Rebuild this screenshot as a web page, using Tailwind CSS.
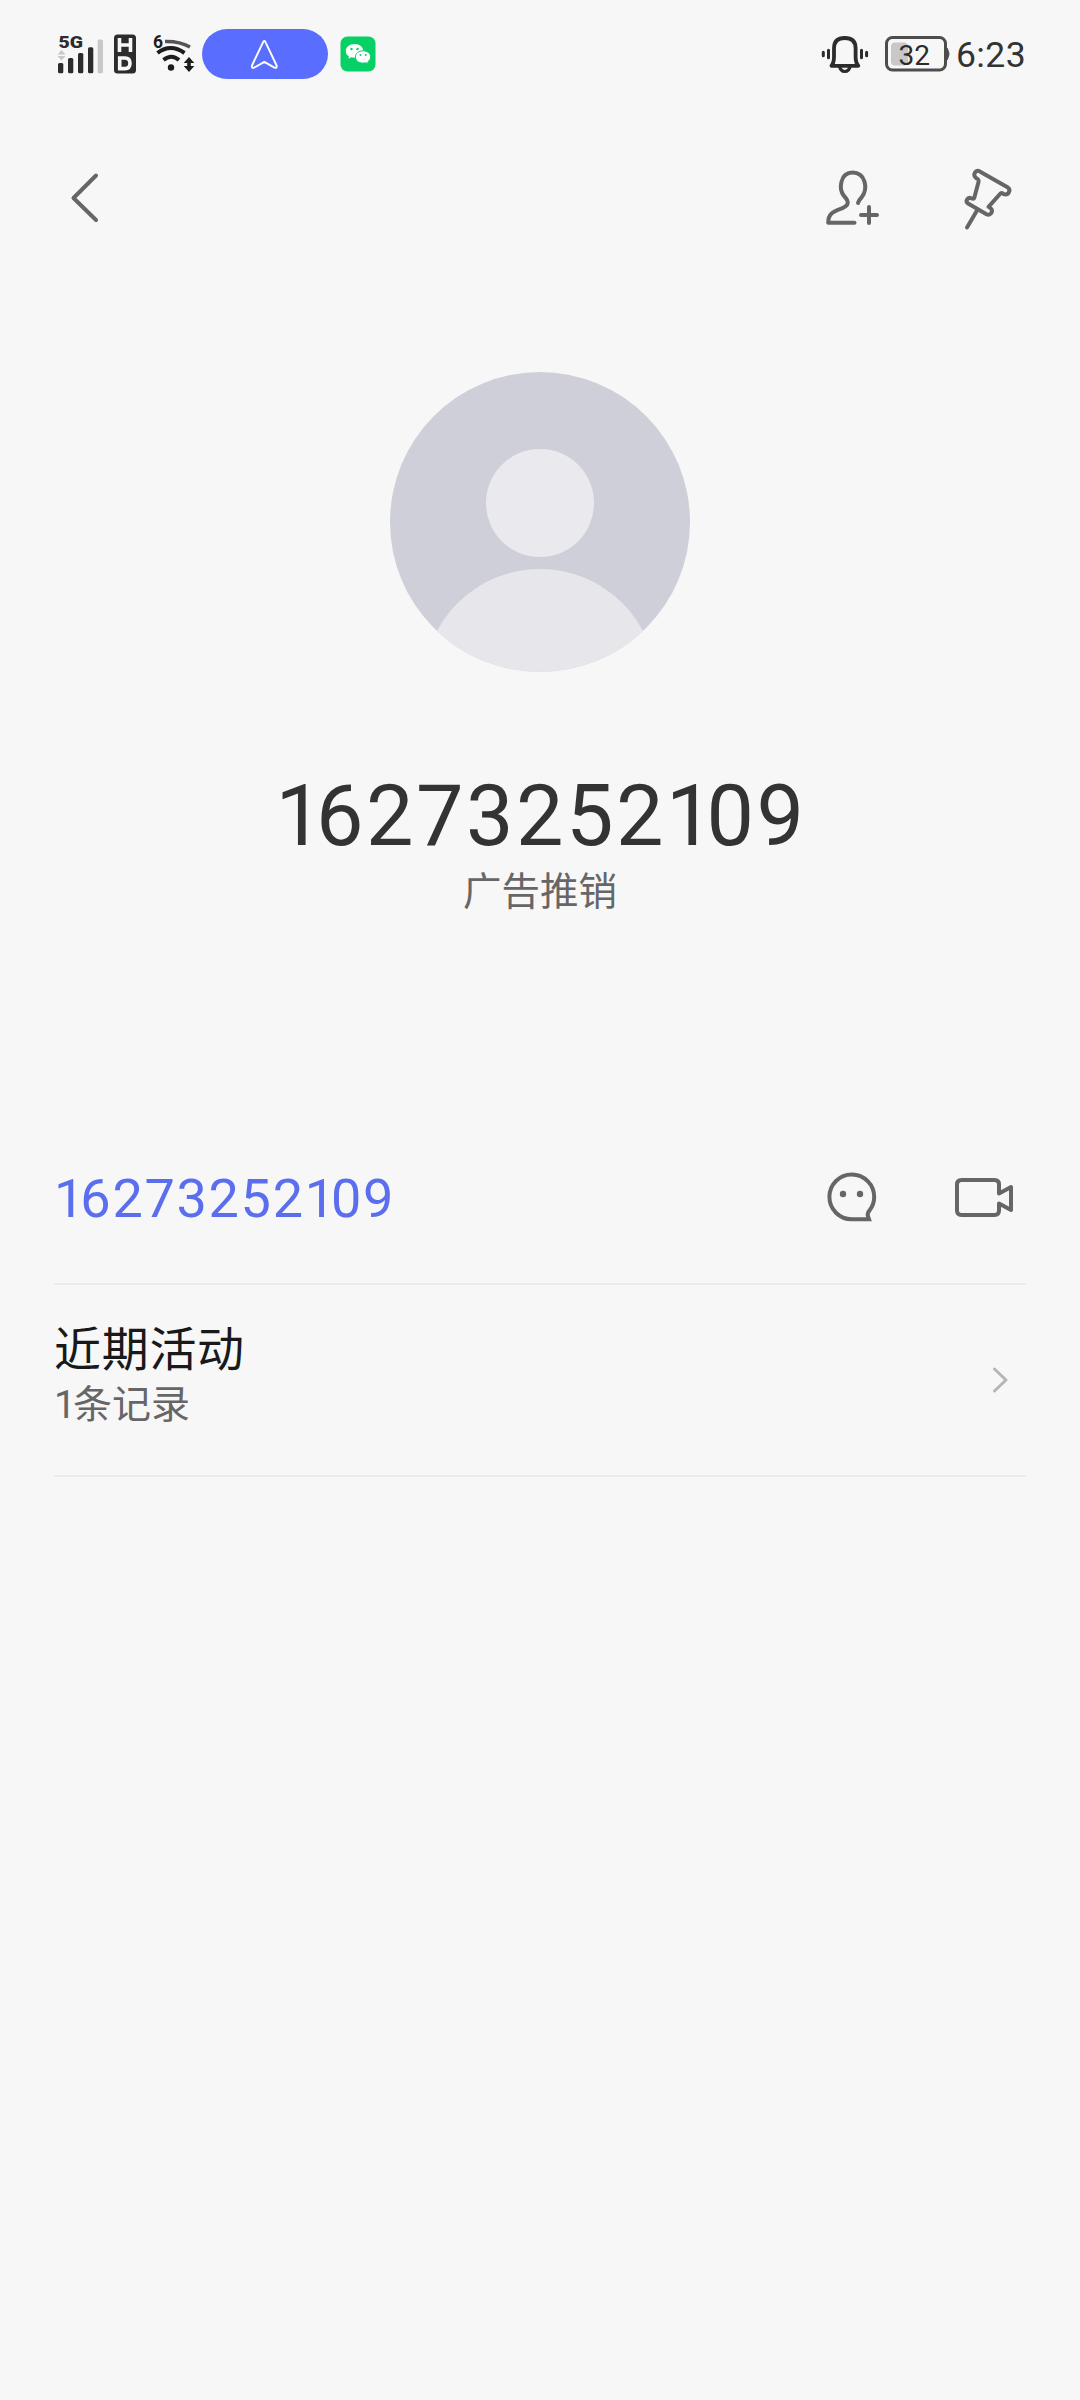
<!DOCTYPE html>
<html lang="zh-CN">
<head>
<meta charset="utf-8">
<title>联系人</title>
<script src="https://cdn.jsdelivr.net/npm/@tailwindcss/browser@4"></script>
</head>
<body class="w-[1080px] h-[2400px] overflow-hidden bg-[#f7f7f7] font-['Roboto','Noto_Sans_CJK_SC',sans-serif] text-[#333333]">
<!-- Status bar -->
<header class="flex h-[108px] items-center pl-[54px] pr-[54px]">
  <svg class="h-[50px] w-[52px] shrink-0" viewBox="54 29 52 50">
    <text x="58.5" y="48.2" font-size="16.5" font-weight="900" textLength="24.500" lengthAdjust="spacingAndGlyphs" fill="#2c2c2c">5G</text>
    <path d="M61.5 50l4 4.500h-8zM61.5 60.500l4-4.500h-8z" fill="#c8c8c8"/>
    <g fill="#2c2c2c"><rect x="58" y="63" width="5.300" height="10.300" rx="1.500"/><rect x="68" y="58" width="5.300" height="15.300" rx="1.500"/><rect x="78" y="53" width="5.300" height="20.300" rx="1.500"/><rect x="88" y="47.300" width="5.300" height="26" rx="1.500"/></g>
    <rect x="97.700" y="39.500" width="5.300" height="33.800" rx="1.500" fill="#c8c8c8"/>
  </svg>
  <svg class="ml-[6px] h-[50px] w-[28px] shrink-0" viewBox="112 29 28 50">
    <rect x="114" y="34.500" width="22" height="39" rx="3.500" fill="#2c2c2c"/>
    <g fill="none" stroke="#f7f7f7" stroke-width="3.600"><path d="M119.500 38v14M130.500 38v14M119.500 45h11"/><path d="M119.700 58h5.300q5 0 5 5.300t-5 5.300h-5.300z"/></g>
  </svg>
  <svg class="ml-[10px] h-[50px] w-[46px] shrink-0" viewBox="150 29 46 50">
    <text x="153" y="47.500" font-size="17.500" font-weight="700" fill="#1d1d1d">6</text>
    <path d="M165 41.500q14-.5 25 5.500" fill="none" stroke="#555" stroke-width="3.600"/>
    <path d="M157.500 53q13-10 27 0M163.500 60q8-6.500 15.500 0" fill="none" stroke="#1d1d1d" stroke-width="4"/>
    <circle cx="171" cy="67.500" r="3.200" fill="#1d1d1d"/>
    <path d="M189 57l5.300 6h-3.500v3h3.500l-5.300 6-5.300-6h3.500v-3h-3.500z" fill="#1d1d1d"/>
  </svg>
  <div class="ml-[6px] flex h-[50px] w-[126px] shrink-0 items-center justify-center rounded-full bg-[#596eff]">
    <svg class="h-[34px] w-[34px]" viewBox="248 36 34 34"><path d="M264.300 40q.8 0 1.300 1.300l11 23.200q.6 3-2.100 2.200l-10.200-5.800-10.200 5.800q-2.700.8-2.100-2.200l11-23.200q.5-1.300 1.300-1.300z" fill="none" stroke="#fff" stroke-width="1.900" stroke-linejoin="round"/></svg>
  </div>
  <svg class="ml-[12px] h-[36px] w-[36px] shrink-0" viewBox="340 36 36 36">
    <rect x="340.500" y="36.500" width="35" height="35" rx="7" fill="#07d166"/>
    <path d="M354.500 44c-5 0-8.700 3-8.700 6.900 0 2.300 1.200 4.200 3.200 5.500l-.7 2.400 3-1.500c1 .3 2 .4 3.200.4 5 0 8.700-3 8.700-6.900s-3.700-6.800-8.700-6.800z" fill="#fff"/>
    <path d="M363 50.800c-4.500 0-7.600 2.700-7.600 6.100s3.100 6.200 7.600 6.200c1 0 1.900-.1 2.700-.4l2.700 1.300-.6-2.200c1.700-1.100 2.800-2.900 2.800-4.900 0-3.400-3.200-6.100-7.600-6.100z" fill="#fff" stroke="#07d166" stroke-width="1"/>
    <g fill="#07d166"><circle cx="351.500" cy="49" r="1.200"/><circle cx="357.500" cy="49" r="1.200"/><circle cx="360.500" cy="55" r="1"/><circle cx="365.700" cy="55" r="1"/></g>
  </svg>
  <svg class="ml-auto h-[50px] w-[50px] shrink-0" viewBox="820 29 50 50">
    <path d="M831.500 65.800q2.500-3 2.500-9v-8.500q0-10.300 10.800-10.300t10.800 10.300v8.500q0 6 2.700 9z" fill="none" stroke="#2c2c2c" stroke-width="3.800" stroke-linejoin="round"/>
    <path d="M839.500 66q.8 5.500 5.300 5.500t5.300-5.500" fill="none" stroke="#2c2c2c" stroke-width="3.200"/>
    <path d="M828.500 50.200v7.600M861.500 50.200v7.600M823.300 52.300v3.400M866.600 52.300v3.400" stroke="#2c2c2c" stroke-width="3" stroke-linecap="round"/>
  </svg>
  <svg class="ml-[12px] h-[50px] w-[70px] shrink-0" viewBox="882 29 70 50">
    <rect x="891" y="42.500" width="17" height="23" rx="4" fill="#c8c8c8"/>
    <rect x="886.500" y="37.500" width="59" height="32.500" rx="6" fill="none" stroke="#4d4d4d" stroke-width="3"/>
    <path d="M947 48q2 4 2 6t-2 6z" fill="#4d4d4d" stroke="#4d4d4d"/>
    <text x="898.500" y="64.800" font-size="28" textLength="31.500" lengthAdjust="spacingAndGlyphs" fill="#2c2c2c">32</text>
  </svg>
  <span class="ml-[4px] w-[70px] shrink-0 pt-[2px] text-[35.500px] leading-[50px] tracking-[0.4px] whitespace-nowrap">6:23</span>
</header>
<!-- Toolbar -->
<nav class="flex h-[182px] items-start justify-between px-[54px] pt-[42px]">
  <svg class="h-[100px] w-[80px]" viewBox="54 150 80 100"><path d="M96 175.500L73.500 198l22.500 22" fill="none" stroke="#666" stroke-width="4" stroke-linecap="round" stroke-linejoin="round"/></svg>
  <svg class="h-[100px] w-[226px]" viewBox="800 150 226 100" fill="none" stroke="#666" stroke-width="4" stroke-linecap="round" stroke-linejoin="round">
    <path d="M854.500 222.800H828.200C828.200 213 834 211.500 841.500 208.500C848.500 206 850 202 844 196C838.500 189 840 172.500 852.500 172.500C865.500 172.500 868.500 188.500 861.500 197.500Q858.500 200.500 858 203"/>
    <path d="M869 207v16M861 215h16"/>
    <path d="M979.800 171.400L1007.500 187.200C1011.500 190 1008.500 195.600 1003.800 194.200Q1001.500 192 1000 194L988.500 206.800C995 210 991 216.500 986.500 214.200L968.500 203.800C964.500 201 967.500 196.800 971.500 198.300Q974 199.500 974.500 197L978.500 182C979 179.500 978.500 179.500 976.500 178.300C971.500 175 976 169 979.800 171.400ZM977 210.500L967 227.500"/>
  </svg>
</nav>
<!-- Profile -->
<section class="flex h-[822px] flex-col items-center pt-[82px]">
  <svg class="h-[300px] w-[300px] rounded-full" viewBox="0 0 300 300">
    <rect width="300" height="300" fill="#cfcfda"/>
    <circle cx="150" cy="131" r="54" fill="#e9e9ee"/>
    <circle cx="150" cy="313.500" r="116.500" fill="#e6e6eb"/>
  </svg>
  <h1 class="mt-[91px] h-[108px] whitespace-nowrap pl-[2px] text-[84.500px] font-normal leading-[108px] tracking-[2.500px]"><span class="tracking-[-7px]">1</span>6273252<span class="tracking-[-7px]">1</span>09</h1>
  <p class="mt-[-7px] text-[38.500px] leading-[56px] text-[#666666]">广告推销</p>
</section>
<!-- Details -->
<main class="px-[54px]">
  <section class="flex h-[173px] items-start justify-between border-b-2 border-[#ebebeb]">
    <a class="mt-[55px] whitespace-nowrap text-[54px] leading-[64px] tracking-[1.700px] text-[#5b6eee]"><span class="tracking-[-4px]">1</span>6273252<span class="tracking-[-4px]">1</span>09</a>
    <svg class="mt-[38px] h-[100px] w-[226px]" viewBox="800 1150 226 100" fill="none" stroke="#666" stroke-width="4">
      <path d="M869 1219.300H851.800A22.400 22.400 0 1 1 874.200 1197Q874.200 1204.500 869.500 1210.500Q867 1213 868 1216.500Z"/>
      <circle cx="843" cy="1194" r="3.200" fill="#666" stroke="none"/><circle cx="860" cy="1194" r="3.200" fill="#666" stroke="none"/>
      <path d="M999 1193.500V1184.500Q999 1180 994.500 1180H961.500Q957 1180 957 1184.500V1210.500Q957 1215 961.500 1215H994.500Q999 1215 999 1210.500V1203.500L1011 1210V1187Z" stroke-linejoin="round"/>
    </svg>
  </section>
  <section class="flex h-[192px] items-start justify-between border-b-2 border-[#ebebeb]">
    <div class="pt-[32px]">
      <h2 class="text-[47px] font-normal leading-[66px] tracking-[0.700px] text-[#191919]">近期活动</h2>
      <p class="mt-[-6px] text-[39px] leading-[56px] text-[#666666]"><span class="tracking-[-3px]">1</span>条记录</p>
    </div>
    <svg class="mt-[70px] h-[50px] w-[50px]" viewBox="976 1355 50 50"><path d="M994.500 1369l11.500 11-11.500 11" fill="none" stroke="#b5b5b5" stroke-width="3" stroke-linecap="round" stroke-linejoin="round"/></svg>
  </section>
</main>
</body>
</html>
